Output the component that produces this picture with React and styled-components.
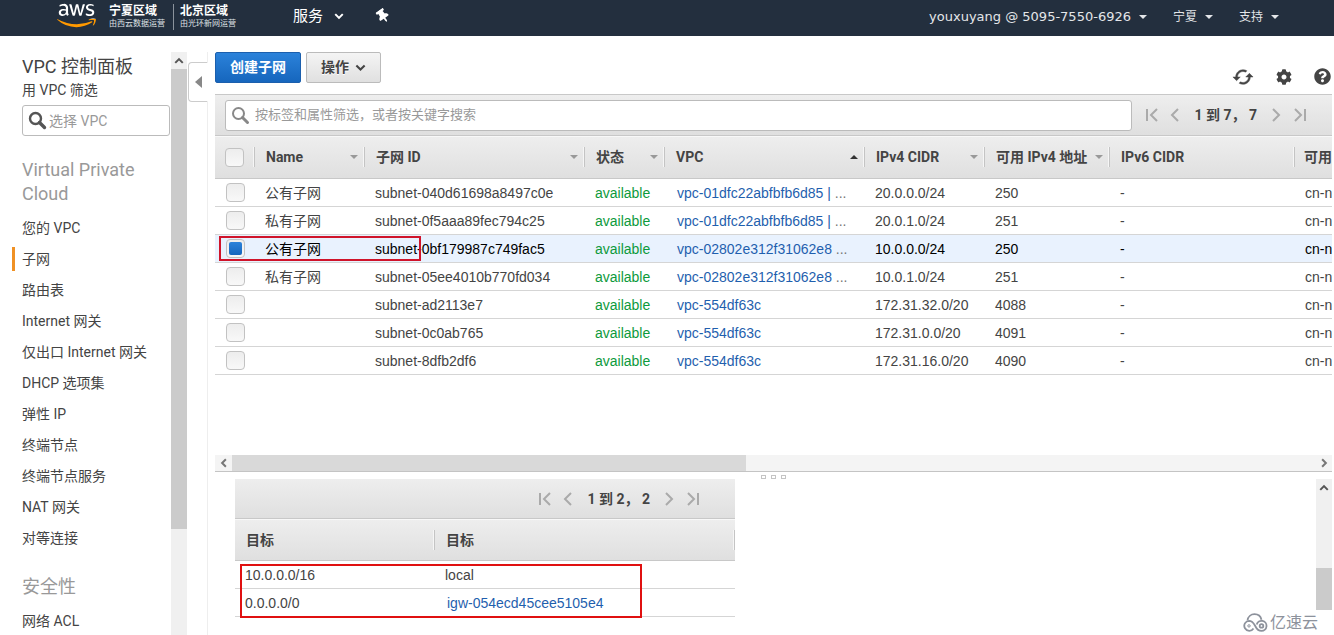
import React from "react";
import styled, { createGlobalStyle, css } from "styled-components";
import { FaAws, FaCog, FaQuestionCircle, FaThumbtack } from "react-icons/fa";
import { MdCached } from "react-icons/md";

const ui = `Roboto, "Noto Sans CJK SC", sans-serif`;
const data = `"Liberation Sans", "Noto Sans CJK SC", sans-serif`;
const bar = "linear-gradient(#eeeeee, #dfdfdf)";

const GlobalStyle = createGlobalStyle`
  *, *::before, *::after { box-sizing: border-box; }
  body { margin: 0; background: #fff; color: #444; font: 14px/20px ${ui}; }
  button, input { font: inherit; color: inherit; }
  a { text-decoration: none; color: inherit; }
`;

const Page = styled.div`
  height: 100vh;
  display: flex;
  flex-direction: column;
  overflow: hidden;
`;

const TopBar = styled.header`
  flex: none;
  height: 36px;
  display: flex;
  align-items: center;
  padding: 0 55px 0 57px;
  background: #232f3e;
  color: #fff;
  white-space: nowrap;
`;

const Brand = styled.a`
  display: flex;
  align-items: flex-start;
  height: 36px;
`;

const AwsLogo = styled(FaAws)`
  width: 39px;
  height: 31px;
  margin-right: 13px;
  path { fill: url(#aws-colors); }
`;

const Region = styled.span`
  display: flex;
  flex-direction: column;
  margin-top: 4px;
  & + & {
    margin-left: 8px;
    padding-left: 6px;
    border-left: 1px solid #8b939c;
  }
`;
const RegionName = styled.strong`
  font-size: 12px;
  line-height: 14px;
`;
const RegionOperator = styled.small`
  font-size: 8px;
  line-height: 12px;
  color: #dfe2e5;
`;

const BarButton = styled.button`
  display: flex;
  align-items: center;
  gap: ${(p) => (p.$wide ? 11 : 8)}px;
  padding: 0;
  border: 0;
  background: none;
  font-family: ${(p) => (p.$wide ? ui : `"DejaVu Sans", "Noto Sans CJK SC", sans-serif`)};
  font-size: ${(p) => (p.$wide ? 15 : p.$user ? 13 : 12)}px;
  line-height: 20px;
  color: ${(p) => (p.$wide ? "#fff" : "#e4e6e9")};
`;
const Services = styled.nav`
  display: flex;
  align-items: center;
  gap: 32px;
  margin: 0 auto 4px 57px;
`;
const PinIcon = styled(FaThumbtack)`
  transform: rotate(-35deg);
`;
const Account = styled.nav`
  display: flex;
  gap: 26px;
  margin-bottom: 2px;
`;

const Body = styled.div`
  flex: 1;
  min-height: 0;
  display: flex;
  padding: 16px 2px 0 0;
`;

const Sidebar = styled.aside`
  flex: none;
  width: 187px;
  display: flex;
  overflow: hidden;
`;
const SideContent = styled.div`
  flex: 1;
  min-width: 0;
  padding: 3px 1px 0 22px;
`;
const Title = styled.h1`
  margin: 0;
  font-size: 18px;
  font-weight: 400;
  line-height: 24px;
`;
const FilterLabel = styled.label`
  display: block;
  line-height: 22px;
  margin-bottom: 4px;
`;
const SearchBox = styled.div`
  display: flex;
  align-items: center;
  gap: ${(p) => (p.$grow ? 5 : 2)}px;
  height: 31px;
  padding: 0 5px;
  border: 1px solid #bbb;
  border-radius: 3px;
  background: #fff;
  ${(p) => p.$grow && css`flex: 1;`}
  svg { flex: none; color: ${(p) => (p.$grow ? "#888" : "#555")}; }
`;
const SearchInput = styled.input`
  flex: 1;
  min-width: 0;
  padding: 0;
  border: 0;
  outline: 0;
  background: none;
  font-size: ${(p) => (p.$small ? 13 : 14)}px;
  &::placeholder { color: #999; opacity: 1; }
`;
const GroupTitle = styled.h2`
  margin: 22px 30px 6px 0;
  font-size: 18px;
  font-weight: 400;
  line-height: 24px;
  color: #999;
`;
const Links = styled.ul`
  margin: 0;
  padding: 0;
  list-style: none;
`;
const LinkItem = styled.li`
  display: flex;
  align-items: center;
  height: 31px;
  margin-left: -10px;
  white-space: nowrap;
  a {
    padding-left: 7px;
    border-left: 3px solid ${(p) => (p.$active ? "#f09124" : "transparent")};
    line-height: 24px;
  }
`;

const ScrollBar = styled.div`
  flex: none;
  display: flex;
  flex-direction: ${(p) => (p.$horizontal ? "row" : "column")};
  ${(p) => (p.$horizontal ? "height: 16px;" : "width: 16px;")}
  background: ${(p) => (p.$horizontal ? "#f4f4f4" : "#f0f0f0")};
`;
const ScrollArrow = styled.button`
  flex: 0 0 17px;
  display: grid;
  place-items: center;
  padding: 0;
  border: 0;
  background: none;
`;
const ScrollTrack = styled.div`
  flex: 1;
  display: flex;
  flex-direction: inherit;
  justify-content: ${(p) => (p.$atEnd ? "flex-end" : "flex-start")};
`;
const Thumb = styled.div`
  flex: 0 0 ${(p) => p.$length};
  background: ${(p) => (p.$light ? "#d9d9d9" : "#cbcbcb")};
`;

const Gutter = styled.div`
  flex: none;
  width: 21px;
  margin-right: 7px;
  padding: 10px 0 0 1px;
  border-right: 1px solid #eee;
`;
const Collapse = styled.button`
  display: grid;
  place-items: center;
  width: 20px;
  height: 40px;
  padding: 0;
  border: 1px solid #ccc;
  border-right-color: #fff;
  border-radius: 4px 0 0 4px;
  background: #fff;
`;

const Main = styled.main`
  flex: 1;
  min-width: 0;
  display: flex;
  flex-direction: column;
`;
const Toolbar = styled.div`
  flex: none;
  display: flex;
  gap: 5px;
  height: 42px;
`;
const ActionButton = styled.button`
  display: flex;
  align-items: center;
  gap: 6px;
  height: 31px;
  padding: 0 14px 1px;
  border-radius: 2px;
  font-weight: 700;
  text-shadow: ${(p) => (p.$primary ? "none" : "0 1px 0 #fff")};
  color: ${(p) => (p.$primary ? "#fff" : "#444")};
  border: 1px solid ${(p) => (p.$primary ? "#1b5fad" : "#bbb")};
  background: ${(p) => (p.$primary ? "linear-gradient(#2b82da, #1666bd)" : "linear-gradient(#f4f4f4, #e0e0e0)")};
`;
const Tools = styled.div`
  display: flex;
  align-items: center;
  gap: 22px;
  margin: 7px 1px 0 auto;
  button {
    display: flex;
    padding: 0;
    border: 0;
    background: none;
  }
`;
const RefreshIcon = styled(MdCached)`
  path:last-child {
    stroke: currentColor;
    stroke-width: 0.5;
  }
`;

const FilterBar = styled.div`
  flex: none;
  display: flex;
  align-items: center;
  gap: 14px;
  height: 42px;
  padding: 0 26px 0 10px;
  border: solid #c8c8c8;
  border-width: 1px 0;
  background: ${bar};
`;
const PagerBar = styled.div`
  display: flex;
  align-items: center;
  justify-content: flex-end;
  height: 40px;
  padding-right: 36px;
  border-bottom: 1px solid #c8c8c8;
  background: ${bar};
`;
const Pager = styled.div`
  display: flex;
  align-items: center;
  gap: 15px;
  font-weight: 700;
  color: #444;
  white-space: pre;
  button {
    display: flex;
    padding: 0;
    border: 0;
    background: none;
    color: #aaa;
  }
  button:first-child { margin-right: -3px; }
  button:last-child { margin-left: -2px; }
`;

const TableArea = styled.div`
  position: relative;
  flex: 1;
  min-height: 0;
  overflow: hidden;
`;
const Table = styled.table`
  width: 100%;
  table-layout: fixed;
  border-collapse: separate;
  border-spacing: 0;
  white-space: nowrap;
`;
const HeadRow = styled.tr`
  th {
    height: ${(p) => (p.$short ? 42 : 43)}px;
    padding: 0;
    border-bottom: 1px solid #c8c8c8;
    box-shadow: inset 0 1px 0 #f8f8f8;
    text-align: left;
    font-weight: 700;
    overflow: hidden;
  }
`;
const Head = styled.thead`
  background: ${bar};
`;
const HeadCell = styled.div`
  display: flex;
  align-items: center;
  justify-content: space-between;
  height: 20px;
  padding: ${(p) => (p.$last ? "0 0 0 9px" : "0 6px 0 11px")};
  border-right: ${(p) => (p.$last ? "0" : "1px solid #c4c4c4")};
  box-shadow: ${(p) => (p.$last ? "none" : "inset -1px 0 0 #f6f6f6")};
`;
const Row = styled.tr`
  ${(p) => p.$selected && css`background: #e9f2fe; color: #000;`}
  td {
    height: 28px;
    padding: 0 0 0 10px;
    border-bottom: 1px solid #d5d5d5;
    font-family: ${data};
    line-height: 20px;
    overflow: hidden;
  }
`;
const Status = styled.span`
  color: #0d9a3c;
`;
const DataLink = styled.a`
  padding-left: 2px;
  color: #1f5fae;
`;
const More = styled.span`
  color: #777;
`;
const Check = styled.input`
  appearance: none;
  display: grid;
  place-items: center;
  width: 19px;
  height: 19px;
  margin: 0 0 0 ${(p) => (p.$head ? -1 : 1)}px;
  border: 1px solid #c2c2c2;
  border-radius: 4px;
  background: linear-gradient(#ededed, #f8f8f8);
  &:checked::before {
    content: "";
    width: 13px;
    height: 13px;
    border-radius: 2px;
    background: linear-gradient(#2b82da, #1666bd);
  }
`;
const Marker = styled.div`
  position: absolute;
  top: ${(p) => p.$top}px;
  left: ${(p) => p.$left}px;
  width: ${(p) => p.$width}px;
  height: ${(p) => p.$height}px;
  border: 2px solid ${(p) => p.$color};
  pointer-events: none;
`;

const Splitter = styled.div`
  flex: none;
  display: flex;
  justify-content: center;
  gap: 5px;
  height: 8px;
  padding-top: 3px;
  border-top: 1px solid #c4c4c4;
  i {
    width: 5px;
    height: 4px;
    border: 1px solid #c4c4c4;
  }
`;
const Details = styled.section`
  position: relative;
  flex: none;
  display: flex;
  align-items: flex-start;
  justify-content: space-between;
  height: 156px;
  padding-left: 20px;
`;
const Routes = styled.div`
  width: 500px;
`;
const DetailScroll = styled(ScrollBar)`
  height: 131px;
`;
const Watermark = styled.div`
  position: absolute;
  right: 14px;
  bottom: 1px;
  display: flex;
  align-items: center;
  gap: 2px;
  font-size: 16px;
  line-height: 22px;
  color: #8d929c;
`;

const Chevron = ({ dir = "down", size = 8, width = 2, color = "#555" }) => {
  const turn = { down: 0, left: 90, up: 180, right: 270 }[dir];
  return (
    <svg width={size} height={size} viewBox="0 0 8 8" aria-hidden="true">
      <path d="M1 2.5 4 5.5 7 2.5" fill="none" stroke={color} strokeWidth={width} transform={`rotate(${turn} 4 4)`} />
    </svg>
  );
};

const Caret = ({ up, color = "#999" }) => (
  <svg width="8" height="4" viewBox="0 0 8 4" aria-hidden="true">
    <path d={up ? "M0 4 4 0 8 4Z" : "M0 0 4 4 8 0Z"} fill={color} />
  </svg>
);

const SearchIcon = ({ weight }) => (
  <svg width="19" height="19" viewBox="0 0 19 19" aria-hidden="true">
    <circle cx="7.5" cy="7.5" r="5.5" fill="none" stroke="currentColor" strokeWidth={weight} />
    <path d="m11.5 11.5 5 5" stroke="currentColor" strokeWidth={weight + 1} strokeLinecap="round" />
  </svg>
);

const PageArrow = ({ end, flip, label }) => (
  <button type="button" aria-label={label}>
    <svg width={end ? 12 : 9} height="14" viewBox={end ? "0 0 12 14" : "3 0 9 14"} aria-hidden="true">
      <g fill="none" stroke="currentColor" strokeWidth="2" transform={flip ? (end ? "translate(12 0) scale(-1 1)" : "translate(15 0) scale(-1 1)") : undefined}>
        <path d="m11 1-6 6 6 6" />
        {end && <path d="M1 1v12" />}
      </g>
    </svg>
  </button>
);

const Pagination = ({ text }) => (
  <Pager>
    <PageArrow end label="首页" />
    <PageArrow label="上一页" />
    <span>{text}</span>
    <PageArrow flip label="下一页" />
    <PageArrow end flip label="末页" />
  </Pager>
);

const services = ["您的 VPC", "子网", "路由表", "Internet 网关", "仅出口 Internet 网关", "DHCP 选项集", "弹性 IP", "终端节点", "终端节点服务", "NAT 网关", "对等连接"];

const columns = [
  { title: "Name", width: 110, sort: "down" },
  { title: "子网 ID", width: 220, sort: "down" },
  { title: "状态", width: 80, sort: "down" },
  { title: "VPC", width: 200, sort: "up" },
  { title: "IPv4 CIDR", width: 120, sort: "down" },
  { title: "可用 IPv4 地址", width: 125, sort: "down" },
  { title: "IPv6 CIDR", width: 185 },
  { title: "可用" },
];

const subnets = [
  { name: "公有子网", id: "subnet-040d61698a8497c0e", vpc: "vpc-01dfc22abfbfb6d85 |", more: true, cidr: "20.0.0.0/24", free: 250 },
  { name: "私有子网", id: "subnet-0f5aaa89fec794c25", vpc: "vpc-01dfc22abfbfb6d85 |", more: true, cidr: "20.0.1.0/24", free: 251 },
  { name: "公有子网", id: "subnet-0bf179987c749fac5", vpc: "vpc-02802e312f31062e8", more: true, cidr: "10.0.0.0/24", free: 250, selected: true },
  { name: "私有子网", id: "subnet-05ee4010b770fd034", vpc: "vpc-02802e312f31062e8", more: true, cidr: "10.0.1.0/24", free: 251 },
  { name: "", id: "subnet-ad2113e7", vpc: "vpc-554df63c", cidr: "172.31.32.0/20", free: 4088 },
  { name: "", id: "subnet-0c0ab765", vpc: "vpc-554df63c", cidr: "172.31.0.0/20", free: 4091 },
  { name: "", id: "subnet-8dfb2df6", vpc: "vpc-554df63c", cidr: "172.31.16.0/20", free: 4090 },
];

export default function App() {
  return (
    <Page>
      <GlobalStyle />
      <TopBar>
        <Brand href="#" aria-label="AWS">
          <svg width="0" height="0" aria-hidden="true">
            <linearGradient id="aws-colors" x1="0" y1="0" x2="0" y2="1">
              <stop offset="0.65" stopColor="#fff" />
              <stop offset="0.65" stopColor="#f90" />
            </linearGradient>
          </svg>
          <AwsLogo />
          <Region>
            <RegionName>宁夏区域</RegionName>
            <RegionOperator>由西云数据运营</RegionOperator>
          </Region>
          <Region>
            <RegionName>北京区域</RegionName>
            <RegionOperator>由光环新网运营</RegionOperator>
          </Region>
        </Brand>
        <Services>
          <BarButton $wide type="button">服务 <Chevron size={10} color="#fff" width={1.6} /></BarButton>
          <BarButton $wide type="button" aria-label="固定"><PinIcon size={14} /></BarButton>
        </Services>
        <Account>
          <BarButton $user type="button">youxuyang @ 5095-7550-6926 <Caret color="#e4e6e9" /></BarButton>
          <BarButton type="button">宁夏 <Caret color="#e4e6e9" /></BarButton>
          <BarButton type="button">支持 <Caret color="#e4e6e9" /></BarButton>
        </Account>
      </TopBar>

      <Body>
        <Sidebar>
          <SideContent>
            <Title>VPC 控制面板</Title>
            <FilterLabel htmlFor="vpc-filter">用 VPC 筛选</FilterLabel>
            <SearchBox>
              <SearchIcon weight={2.4} />
              <SearchInput id="vpc-filter" placeholder="选择 VPC" />
            </SearchBox>
            <GroupTitle>Virtual Private Cloud</GroupTitle>
            <Links>
              {services.map((name) => (
                <LinkItem key={name} $active={name === "子网"}><a href="#">{name}</a></LinkItem>
              ))}
            </Links>
            <GroupTitle>安全性</GroupTitle>
            <Links>
              <LinkItem><a href="#">网络 ACL</a></LinkItem>
            </Links>
          </SideContent>
          <ScrollBar>
            <ScrollArrow type="button" aria-label="向上滚动"><Chevron dir="up" size={10} width={1.6} /></ScrollArrow>
            <ScrollTrack><Thumb $length="460px" /></ScrollTrack>
          </ScrollBar>
        </Sidebar>
        <Gutter>
          <Collapse type="button" aria-label="收起">
            <svg width="7" height="12" viewBox="0 0 7 12" aria-hidden="true"><path d="M7 0v12L0 6Z" fill="#888" /></svg>
          </Collapse>
        </Gutter>

        <Main>
          <Toolbar>
            <ActionButton $primary type="button">创建子网</ActionButton>
            <ActionButton type="button">操作 <Chevron size={11} width={1.5} color="#444" /></ActionButton>
            <Tools>
              <button type="button" aria-label="刷新"><RefreshIcon size={22} /></button>
              <button type="button" aria-label="设置"><FaCog size={16} /></button>
              <button type="button" aria-label="帮助"><FaQuestionCircle size={17} /></button>
            </Tools>
          </Toolbar>
          <FilterBar>
            <SearchBox $grow>
              <SearchIcon weight={2} />
              <SearchInput $small aria-label="筛选" placeholder="按标签和属性筛选，或者按关键字搜索" />
            </SearchBox>
            <Pagination text="1 到 7， 7" />
          </FilterBar>
          <TableArea>
            <Table>
              <colgroup>
                <col width="40" />
                {columns.map((c) => <col key={c.title} width={c.width} />)}
              </colgroup>
              <Head>
                <HeadRow>
                  <th><HeadCell><Check $head type="checkbox" aria-label="全选" /></HeadCell></th>
                  {columns.map((c, i) => (
                    <th key={c.title}>
                      <HeadCell $last={i === columns.length - 1}>
                        {c.title}
                        {c.sort && <Caret up={c.sort === "up"} color={c.sort === "up" ? "#333" : "#999"} />}
                      </HeadCell>
                    </th>
                  ))}
                </HeadRow>
              </Head>
              <tbody>
                {subnets.map((s) => (
                  <Row key={s.id} $selected={s.selected}>
                    <td><Check type="checkbox" defaultChecked={s.selected} aria-label={s.id} /></td>
                    <td>{s.name}</td>
                    <td>{s.id}</td>
                    <td><Status>available</Status></td>
                    <td><DataLink href="#">{s.vpc}</DataLink>{s.more && <More> ...</More>}</td>
                    <td>{s.cidr}</td>
                    <td>{s.free}</td>
                    <td>-</td>
                    <td>cn-n</td>
                  </Row>
                ))}
              </tbody>
            </Table>
            <Marker $top={100} $left={4} $width={202} $height={25} $color="#d0142a" />
          </TableArea>
          <ScrollBar $horizontal>
            <ScrollArrow type="button" aria-label="向左滚动"><Chevron dir="left" size={10} width={1.6} color="#777" /></ScrollArrow>
            <ScrollTrack><Thumb $light $length="514px" /></ScrollTrack>
            <ScrollArrow type="button" aria-label="向右滚动"><Chevron dir="right" size={10} width={1.6} color="#777" /></ScrollArrow>
          </ScrollBar>
          <Splitter><i /><i /><i /></Splitter>
          <Details>
            <Routes>
              <PagerBar><Pagination text="1 到 2， 2" /></PagerBar>
              <Table>
                <Head>
                  <HeadRow $short>
                    <th><HeadCell>目标</HeadCell></th>
                    <th width="300"><HeadCell>目标</HeadCell></th>
                  </HeadRow>
                </Head>
                <tbody>
                  <Row><td>10.0.0.0/16</td><td>local</td></Row>
                  <Row><td>0.0.0.0/0</td><td><DataLink href="#">igw-054ecd45cee5105e4</DataLink></td></Row>
                </tbody>
              </Table>
            </Routes>
            <DetailScroll>
              <ScrollArrow type="button" aria-label="向上滚动"><Chevron dir="up" size={10} width={1.6} /></ScrollArrow>
              <ScrollTrack $atEnd><Thumb $length="42px" /></ScrollTrack>
            </DetailScroll>
            <Marker $top={85} $left={25} $width={402} $height={54} $color="#e01010" />
            <Watermark>
              <svg width="25" height="20" viewBox="0 0 25 20" fill="none" stroke="currentColor" strokeWidth="1.8" aria-hidden="true">
                <path d="M4.500 7.500C5 3.500 8 1.200 11.500 1.200c3.500 0 6.200 2 7 5.500" />
                <path d="M10.500 15.500A5 5 0 1 1 6 7.800c4 0 5 3 6.500 5.700 1.300 2.600 3 4.400 6 4.400a5 5 0 1 0-4.800-6.400" />
                <circle cx="18.500" cy="12.900" r="1.800" />
                <circle cx="6" cy="12.900" r="1.200" strokeWidth="1" />
              </svg>
              亿速云
            </Watermark>
          </Details>
        </Main>
      </Body>
    </Page>
  );
}
